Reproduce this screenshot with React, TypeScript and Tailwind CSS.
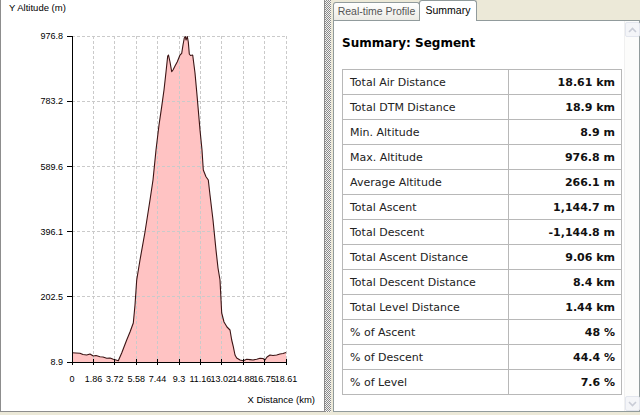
import React from "react";

const pts: [number, number][] = [
  [72, 352.7], [76, 353], [80, 353.3], [83, 354.5], [86.7, 355], [90, 354], [93.3, 356], [96, 355.5],
  [100, 356.7], [103, 357], [106.7, 358.3], [110, 358], [113.3, 359.3], [116, 360], [118.3, 360.7],
  [121.7, 353], [124, 347], [126.7, 340], [130, 332], [133.3, 323], [135, 305], [136.7, 280],
  [140, 260], [145, 232], [150, 200], [153, 180], [156, 150], [159, 125], [161.7, 106.7], [164, 90],
  [166, 72], [167.7, 56], [168.5, 55], [170, 62], [171.7, 71.7], [173, 70], [175, 66], [177.3, 61.7],
  [180, 55], [181.7, 53.3], [183, 45], [184.3, 38], [185.3, 36.5], [186, 40], [187.3, 36.5],
  [188.3, 42], [189.3, 54], [190.5, 55.5], [192.7, 55], [195, 73], [197, 95], [200, 130], [202, 150],
  [203.3, 170], [206, 176.7], [208.3, 180], [210, 195], [213, 220], [216, 250], [218, 268], [220, 280],
  [221.7, 313], [224, 322], [227, 327], [230, 330], [231.7, 340], [233.3, 346.7], [235, 355],
  [236.7, 358], [240, 360], [243.3, 360.7], [246.7, 359.3], [250, 359.6], [253, 360], [256.7, 359.3],
  [260, 358.3], [263, 358.5], [265, 360], [267, 357], [270, 355], [273, 355.5], [276.7, 355],
  [280, 354], [283, 353.5], [286, 352.5],
];

const line = pts.map((p, i) => `${i === 0 ? "M" : "L"}${p[0]} ${p[1]}`).join(" ");
const area = `M72 362 ${pts.map((p) => `L${p[0]} ${p[1]}`).join(" ")} L286 362 Z`;

const X0 = 72;
const X1 = 286;
const Y0 = 36;
const Y1 = 362;
const xLabels = ["0", "1.86", "3.72", "5.58", "7.44", "9.3", "11.16", "13.02", "14.88", "16.75", "18.61"];
const yLabels = ["976.8", "783.2", "589.6", "396.1", "202.5", "8.9"];

function Chart() {
  const xs = xLabels.map((_, i) => X0 + ((X1 - X0) * i) / 10);
  const ys = yLabels.map((_, i) => Y0 + ((Y1 - Y0) * i) / 5);
  const font = "'Liberation Sans', Arial, sans-serif";
  return (
    <svg width={323} height={411} viewBox="1 0 323 411" className="block">
      <path d={area} fill="rgba(255,40,40,0.28)" stroke="none" />
      {xs.slice(1).map((x) => (
        <line key={"vx" + x} x1={x} y1={Y0} x2={x} y2={Y1} stroke="#cacaca" strokeWidth={1} strokeDasharray="3 2" shapeRendering="crispEdges" />
      ))}
      {ys.slice(0, 5).map((y) => (
        <line key={"hy" + y} x1={X0} y1={y} x2={X1} y2={y} stroke="#cacaca" strokeWidth={1} strokeDasharray="3 2" shapeRendering="crispEdges" />
      ))}
      <path d={line} fill="none" stroke="#3b1414" strokeWidth={1.1} strokeLinejoin="round" />
      <line x1={X0} y1={Y0} x2={X0} y2={Y1 + 3} stroke="#000" strokeWidth={1} shapeRendering="crispEdges" />
      <line x1={X0} y1={Y1} x2={X1} y2={Y1} stroke="#000" strokeWidth={1} shapeRendering="crispEdges" />
      {ys.map((y) => (
        <line key={"ty" + y} x1={X0 - 5} y1={y} x2={X0} y2={y} stroke="#000" strokeWidth={1} shapeRendering="crispEdges" />
      ))}
      {xs.map((x) => (
        <line key={"tx" + x} x1={x} y1={Y1 - 3} x2={x} y2={Y1 + 3} stroke="#000" strokeWidth={1} shapeRendering="crispEdges" />
      ))}
      {yLabels.map((t, i) => (
        <text key={t} x={63} y={ys[i] + 3.2} textAnchor="end" fontSize={9} fontFamily={font} fill="#000">
          {t}
        </text>
      ))}
      {xLabels.map((t, i) => (
        <text key={t} x={xs[i]} y={381.5} textAnchor="middle" fontSize={9} fontFamily={font} fill="#000">
          {t}
        </text>
      ))}
      <text x={9} y={10.5} fontSize={9.5} fontFamily={font} fill="#000">
        Y Altitude (m)
      </text>
      <text x={315} y={402.5} textAnchor="end" fontSize={9.5} fontFamily={font} fill="#000">
        X Distance (km)
      </text>
    </svg>
  );
}

const rows: [string, string][] = [
  ["Total Air Distance", "18.61 km"],
  ["Total DTM Distance", "18.9 km"],
  ["Min. Altitude", "8.9 m"],
  ["Max. Altitude", "976.8 m"],
  ["Average Altitude", "266.1 m"],
  ["Total Ascent", "1,144.7 m"],
  ["Total Descent", "-1,144.8 m"],
  ["Total Ascent Distance", "9.06 km"],
  ["Total Descent Distance", "8.4 km"],
  ["Total Level Distance", "1.44 km"],
  ["% of Ascent", "48 %"],
  ["% of Descent", "44.4 %"],
  ["% of Level", "7.6 %"],
];

function ScrollBtn({ up }: { up: boolean }) {
  return (
    <div className="w-[15px] h-[15px] rounded-[2px] border border-[#e3e6ee] bg-[#f4f5f8] flex items-center justify-center">
      <svg width="9" height="6" viewBox="0 0 9 6">
        <path d={up ? "M1 5 L4.5 1.5 L8 5" : "M1 1 L4.5 4.5 L8 1"} fill="none" stroke="#c9ccd6" strokeWidth="1.6" />
      </svg>
    </div>
  );
}

export default function App() {
  return (
    <div className="w-[640px] h-[415px] bg-[#ece9d8] flex items-start overflow-hidden">
      <div className="w-[325px] h-[412px] bg-white border-l border-r border-b border-[#8d8d8d] shrink-0">
        <Chart />
      </div>
      <div className="w-[6px] h-[412px] shrink-0 bg-[conic-gradient(#8a8a8a_25%,#f4f4f4_0_50%,#8a8a8a_0_75%,#f4f4f4_0)] bg-[length:2px_2px]" />
      <div className="w-[2px] h-[412px] shrink-0" />
      <div className="w-[307px] h-[412px] shrink-0 flex flex-col font-['Liberation_Sans',Arial,sans-serif]">
        <div className="h-[20px] flex items-end relative z-10">
          <div className="w-[87px] h-[18px] border border-b-0 border-[#919b9c] rounded-t-[3px] bg-gradient-to-b from-white to-[#ecebe5] text-[10.5px] text-[#555] flex items-center justify-center leading-none">
            Real-time Profile
          </div>
          <div className="-ml-px w-[58px] h-[21px] -mb-px border border-b-0 border-[#919b9c] rounded-t-[3px] bg-white text-[10.5px] text-black flex items-center justify-center leading-none pb-[1px]">
            Summary
          </div>
        </div>
        <div className="flex-1 border border-[#919b9c] bg-white flex">
          <div className="flex-1 pl-[8px] pt-[14px] font-['DejaVu_Sans',Verdana,sans-serif]">
            <div className="text-[12px] font-bold leading-[16px] text-black">Summary: Segment</div>
            <table className="mt-[18px] w-[280px] border-collapse border border-[#a8a8a8] text-[11px]">
              <tbody>
                {rows.map(([k, v]) => (
                  <tr key={k} className="h-[25px]">
                    <td className="w-[166px] border border-[#b8b8b8] pl-[7px] text-[#222] leading-none p-0">{k}</td>
                    <td className="border border-[#b8b8b8] pr-[6px] text-right font-bold text-[#111] leading-none p-0">{v}</td>
                  </tr>
                ))}
              </tbody>
            </table>
          </div>
          <div className="w-[15px] pt-[1px] flex flex-col justify-between bg-[#fcfcfb] border-l border-[#f0f0f0]">
            <ScrollBtn up={true} />
            <ScrollBtn up={false} />
          </div>
        </div>
      </div>
    </div>
  );
}
